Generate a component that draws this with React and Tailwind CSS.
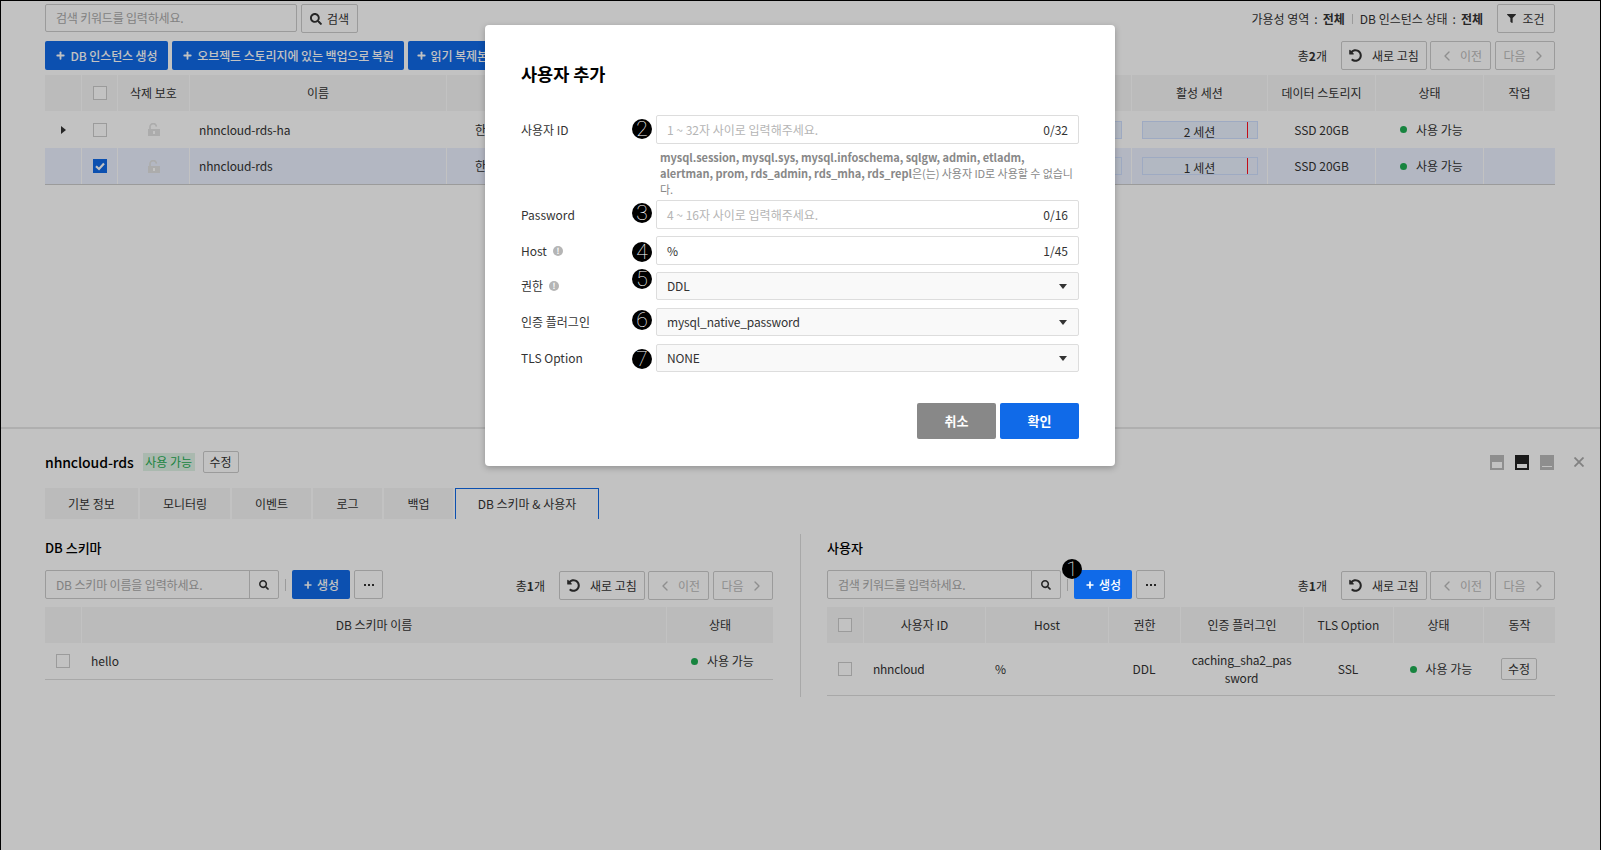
import { FaSearch, FaFilter, FaUndoAlt } from "react-icons/fa";
import { ChevronLeft, ChevronRight, Plus } from "lucide-react";

const btnLine = "h-[29px] flex items-center justify-center border border-[#ccc] rounded-[2px] bg-white text-[12px] text-[#333]";
const btnBlue = "h-[29px] flex items-center justify-center rounded-[2px] bg-[#106ae8] text-white text-[12px] font-medium tracking-[-0.1px]";

function Check({ on }) {
  if (on) {
    return (
      <span className="block w-[14px] h-[14px] bg-[#106ae8]">
        <svg viewBox="0 0 14 14" className="w-[14px] h-[14px]">
          <path d="M3 7.2 L6 10 L11 4.5" fill="none" stroke="#fff" strokeWidth="2.2" />
        </svg>
      </span>
    );
  }
  return <span className="block w-[14px] h-[14px] border border-[#ccc] bg-white" />;
}

function Lock() {
  return (
    <svg viewBox="0 0 12 13" className="w-[12px] h-[13px]">
      <path d="M2 6V4a3.2 3.2 0 0 1 6.400-.4" fill="none" stroke="#e2e2e2" strokeWidth="1.600" />
      <rect x="0" y="6" width="12" height="7" fill="#e2e2e2" />
      <rect x="5" y="8" width="2" height="3" fill="#fff" />
    </svg>
  );
}

function Dot() {
  return <span className="w-[7px] h-[7px] rounded-full bg-[#1fae54]" />;
}

function Dots() {
  return (
    <svg viewBox="0 0 10 2" className="w-[10px] h-[2px]">
      <rect x="0" width="2" height="2" fill="#333" />
      <rect x="4" width="2" height="2" fill="#333" />
      <rect x="8" width="2" height="2" fill="#333" />
    </svg>
  );
}

function Pager({ total, className = "" }) {
  return (
    <div className={`ml-auto flex items-center ${className}`}>
      <span className="text-[12px] mr-[14px]">
        총<b>{total}</b>개
      </span>
      <button className={`${btnLine} w-[86px] gap-[10px] mr-[3px]`}>
        <FaUndoAlt className="w-[13px] h-[13px]" />
        새로 고침
      </button>
      <button className={`${btnLine} w-[61px] gap-[5px] mr-[4px] text-[#bbb]`}>
        <ChevronLeft className="w-[16px] h-[16px]" />
        이전
      </button>
      <button className={`${btnLine} w-[60px] gap-[5px] text-[#bbb]`}>
        다음
        <ChevronRight className="w-[16px] h-[16px]" />
      </button>
    </div>
  );
}

function Badge({ n, className }) {
  return (
    <span className={`absolute w-[20px] h-[20px] rounded-full bg-black text-white flex items-center justify-center text-[21px] leading-none font-['Roboto',sans-serif] font-thin ${className}`}>
      {n}
    </span>
  );
}

function Bang() {
  return (
    <span className="w-[10px] h-[10px] rounded-full bg-[#b5b5b5] text-white text-[8px] leading-[10px] font-bold text-center">!</span>
  );
}

function Field({ label, bang, n, badgeTop, value, placeholder, count, select, className = "" }) {
  return (
    <div className={`relative flex items-center ${className}`}>
      <div className="w-[108px] mr-[27px] flex items-center gap-[6px] text-[12px]">
        {label}
        {bang && <Bang />}
      </div>
      <Badge n={n} className={`left-[111px] ${badgeTop}`} />
      {select ? (
        <div className="flex-1 h-[28px] border border-[#ddd] rounded-[2px] bg-[#f9f9f9] flex items-center justify-between pl-[10px] pr-[11px] text-[12px] tracking-[-0.15px]">
          {value}
          <span className="w-0 h-0 border-x-[4px] border-x-transparent border-t-[5px] border-t-[#333]" />
        </div>
      ) : (
        <div className="flex-1 h-[29px] border border-[#ddd] rounded-[2px] bg-white flex items-center justify-between px-[10px] text-[12px]">
          {value ? <span>{value}</span> : <span className="text-[#b5b5b5]">{placeholder}</span>}
          <span>{count}</span>
        </div>
      )}
    </div>
  );
}

function TopRow({ name, open, checked, selected, session, fillWidth }) {
  const bg = selected ? "bg-[#ebf1ff] border-b border-[#ccc]" : "bg-white";
  return (
    <div className={`grid grid-cols-[36px_36px_72px_257px_584px_101px_136px_108px_108px_72px] h-[37px] items-stretch ${bg}`}>
      <div className="flex items-center justify-center">
        {open && <span className="w-0 h-0 border-y-[4px] border-y-transparent border-l-[5px] border-l-[#333]" />}
      </div>
      <div className="flex items-center justify-center border-l border-white">
        <Check on={checked} />
      </div>
      <div className="flex items-center justify-center border-l border-white">
        <Lock />
      </div>
      <div className="flex items-center pl-[9px] border-l border-white tracking-[-0.15px]">{name}</div>
      <div className="flex items-center pl-[28px] border-l border-white">한국(판교) 리전</div>
      <div className="flex items-center border-l border-white pr-[9px]">
        <div className="w-full h-[18px] bg-[#eaf2ff] border border-[#d0e0ff]" />
      </div>
      <div className="flex items-center justify-center border-l border-white">
        <div className="relative w-[116px] h-[18px] border border-[#d0e0ff] text-center leading-[20px]">
          <div className={`absolute inset-y-0 left-0 bg-[#eaf2ff] ${fillWidth}`} />
          <span className="relative">{session}</span>
          <div className="absolute inset-y-0 left-[104px] w-[1.500px] bg-[#ff1020]" />
        </div>
      </div>
      <div className="flex items-center justify-center border-l border-white">SSD 20GB</div>
      <div className="flex items-center justify-center gap-[9px] pl-[4px] border-l border-white">
        <Dot />
        사용 가능
      </div>
      <div className="border-l border-white" />
    </div>
  );
}

const topHead = ["", "", "삭제 보호", "이름", "", "", "활성 세션", "데이터 스토리지", "상태", "작업"];
const userHead = ["", "사용자 ID", "Host", "권한", "인증 플러그인", "TLS Option", "상태", "동작"];

export default function App() {
  return (
    <div className="relative w-[1601px] h-[850px] overflow-hidden bg-white text-[#333] text-[12px] font-['Noto_Sans_CJK_KR','Noto_Sans',sans-serif] border-l border-r border-t border-black">
      {/* top list */}
      <div className="h-[428px] pl-[44px] pr-[45px] pt-[3px] border-b-2 border-[#e6e6e6]">
        <div className="flex items-start h-[29px]">
          <div className="w-[252px] h-[28px] border border-[#ccc] rounded-[2px] flex items-center pl-[10px] text-[#aaa] tracking-[-0.2px]">
            검색 키워드를 입력하세요.
          </div>
          <button className={`${btnLine} w-[57px] ml-[4px] gap-[5px]`}>
            <FaSearch className="w-[12px] h-[12px]" />
            검색
          </button>
          <div className="ml-auto flex items-center">
            <span className="flex items-center">
              가용성 영역<span className="mx-[5px]">:</span>
              <b>전체</b>
            </span>
            <span className="w-px h-[10px] bg-[#ccc] mx-[7px]" />
            <span className="flex items-center">
              DB 인스턴스 상태<span className="mx-[5px]">:</span>
              <b>전체</b>
            </span>
            <button className={`${btnLine} w-[58px] ml-[14px] gap-[6px]`}>
              <FaFilter className="w-[9px] h-[9px]" />
              조건
            </button>
          </div>
        </div>
        <div className="flex items-center mt-[8px]">
          <button className={`${btnBlue} w-[123px] gap-[4px]`}>
            <Plus className="w-[11px] h-[11px]" strokeWidth={4} />
            DB 인스턴스 생성
          </button>
          <button className={`${btnBlue} w-[232px] ml-[4px] gap-[4px]`}>
            <Plus className="w-[11px] h-[11px]" strokeWidth={4} />
            오브젝트 스토리지에 있는 백업으로 복원
          </button>
          <button className={`${btnBlue} w-[112px] ml-[4px] gap-[4px]`}>
            <Plus className="w-[11px] h-[11px]" strokeWidth={4} />
            읽기 복제본 생성
          </button>
          <Pager total="2" />
        </div>
        <div className="mt-[5px]">
          <div className="grid grid-cols-[36px_36px_72px_257px_584px_101px_136px_108px_108px_72px] h-[36px] bg-[#f6f6f6]">
            {topHead.map((h, i) => (
              <div key={i} className={`flex items-center justify-center ${i > 0 ? "border-l border-white" : ""}`}>
                {i === 1 ? <Check /> : h}
              </div>
            ))}
          </div>
          <TopRow name="nhncloud-rds-ha" open session="2 세션" fillWidth="w-full" />
          <TopRow name="nhncloud-rds" checked selected session="1 세션" fillWidth="w-[104px]" />
        </div>
      </div>

      {/* detail pane */}
      <div className="pl-[44px]">
        <div className="flex items-center h-[22px] mt-[22px] pr-[16px]">
          <span className="text-[14px] font-medium text-black tracking-[-0.1px]">nhncloud-rds</span>
          <span className="ml-[9px] w-[52px] h-[18px] flex items-center justify-center bg-[#e0f3e6] text-[#1fae54]">사용 가능</span>
          <button className="ml-[8px] w-[36px] h-[22px] flex items-center justify-center border border-[#ccc] rounded-[2px]">수정</button>
          <div className="ml-auto flex items-center gap-[11px]">
            <svg viewBox="0 0 14 15" className="w-[14px] h-[15px]">
              <rect width="14" height="15" fill="#bbb" />
              <rect x="2" y="7" width="10" height="6" fill="#fff" />
            </svg>
            <svg viewBox="0 0 14 15" className="w-[14px] h-[15px]">
              <rect width="14" height="15" fill="#222" />
              <rect x="2" y="9" width="10" height="4" fill="#fff" />
            </svg>
            <svg viewBox="0 0 14 15" className="w-[14px] h-[15px]">
              <rect width="14" height="15" fill="#bbb" />
              <rect x="2" y="11" width="10" height="1" fill="#fff" />
            </svg>
            <svg viewBox="0 0 10 10" className="ml-[9px] w-[10px] h-[10px]">
              <path d="M.5 .5 L9.500 9.500 M9.500 .5 L.5 9.500" stroke="#aaa" strokeWidth="1.800" />
            </svg>
          </div>
        </div>

        <div className="flex mt-[15px] h-[31px] gap-[2px]">
          <div className="w-[93px] flex items-center justify-center bg-[#f6f6f6]">기본 정보</div>
          <div className="w-[90px] flex items-center justify-center bg-[#f6f6f6]">모니터링</div>
          <div className="w-[79px] flex items-center justify-center bg-[#f6f6f6]">이벤트</div>
          <div className="w-[69px] flex items-center justify-center bg-[#f6f6f6]">로그</div>
          <div className="w-[69px] flex items-center justify-center bg-[#f6f6f6]">백업</div>
          <div className="w-[144px] flex items-center justify-center border-x border-t border-[#106ae8]">DB 스키마 &amp; 사용자</div>
        </div>

        <div className="flex mt-[15px]">
          {/* schema */}
          <div className="w-[728px]">
            <div className="h-[28px] flex items-center text-[13px] font-medium text-black">DB 스키마</div>
            <div className="flex items-start h-[30px] mt-[8px]">
              <div className="w-[234px] h-[29px] border border-[#ccc] rounded-[2px] flex">
                <div className="flex-1 flex items-center pl-[10px] text-[#aaa] tracking-[-0.15px]">DB 스키마 이름을 입력하세요.</div>
                <div className="w-[29px] border-l border-[#ccc] flex items-center justify-center">
                  <FaSearch className="w-[10px] h-[10px]" />
                </div>
              </div>
              <span className="w-px h-[12px] bg-[#ccc] mx-[6px] mt-[9px]" />
              <button className={`${btnBlue} w-[58px] gap-[4px]`}>
                <Plus className="w-[10px] h-[10px]" strokeWidth={4} />
                생성
              </button>
              <button className={`${btnLine} w-[29px] ml-[4px]`}>
                <Dots />
              </button>
              <Pager total="1" className="mt-[1px]" />
            </div>
            <div className="grid grid-cols-[36px_585px_107px] h-[36px] mt-[7px] bg-[#f6f6f6]">
              <div />
              <div className="flex items-center justify-center border-l border-white">DB 스키마 이름</div>
              <div className="flex items-center justify-center border-l border-white">상태</div>
            </div>
            <div className="grid grid-cols-[36px_585px_107px] h-[37px] border-b border-[#ddd]">
              <div className="flex items-center justify-center">
                <Check />
              </div>
              <div className="flex items-center pl-[10px]">hello</div>
              <div className="flex items-center justify-center gap-[9px] pl-[6px]">
                <Dot />
                사용 가능
              </div>
            </div>
          </div>

          {/* users */}
          <div className="ml-[27px] pl-[26px] w-[755px] h-[163px] border-l border-[#ddd]">
            <div className="h-[28px] flex items-center text-[13px] font-medium text-black">사용자</div>
            <div className="flex items-start h-[30px] mt-[8px]">
              <div className="w-[234px] h-[29px] border border-[#ccc] rounded-[2px] flex">
                <div className="flex-1 flex items-center pl-[10px] text-[#aaa] tracking-[-0.2px]">검색 키워드를 입력하세요.</div>
                <div className="w-[29px] border-l border-[#ccc] flex items-center justify-center">
                  <FaSearch className="w-[10px] h-[10px]" />
                </div>
              </div>
              <span className="w-px h-[12px] bg-[#ccc] mx-[6px] mt-[9px]" />
              <div className="relative z-20">
                <button className={`${btnBlue} w-[58px] gap-[4px] bg-[#0b4fb4]`}>
                  <Plus className="w-[10px] h-[10px]" strokeWidth={4} />
                  생성
                </button>
                <Badge n="1" className="left-[-12px] top-[-11px]" />
              </div>
              <button className={`${btnLine} w-[29px] ml-[4px]`}>
                <Dots />
              </button>
              <Pager total="1" className="mt-[1px]" />
            </div>
            <div className="grid grid-cols-[36px_122px_123px_72px_123px_90px_90px_72px] h-[36px] mt-[7px] bg-[#f6f6f6]">
              {userHead.map((h, i) => (
                <div key={i} className={`flex items-center justify-center ${i > 0 ? "border-l border-white" : ""}`}>
                  {i === 0 ? <Check /> : h}
                </div>
              ))}
            </div>
            <div className="grid grid-cols-[36px_122px_123px_72px_123px_90px_90px_72px] h-[53px] border-b border-[#ddd] items-center">
              <div className="flex justify-center">
                <Check />
              </div>
              <div className="pl-[10px] tracking-[-0.25px]">nhncloud</div>
              <div className="pl-[10px]">%</div>
              <div className="text-center">DDL</div>
              <div className="text-center leading-[18px] px-[10px] break-all tracking-[-0.2px]">caching_sha2_password</div>
              <div className="text-center">SSL</div>
              <div className="flex items-center justify-center gap-[9px] pl-[6px]">
                <Dot />
                사용 가능
              </div>
              <div className="flex justify-center">
                <button className="w-[36px] h-[22px] flex items-center justify-center border border-[#ccc] rounded-[2px]">수정</button>
              </div>
            </div>
          </div>
        </div>
      </div>

      {/* dim */}
      <div className="absolute inset-0 bg-black/[0.24] z-10" />

      {/* modal */}
      <div className="absolute left-[484px] top-[24px] w-[630px] h-[441px] z-30 bg-white rounded-[4px] shadow-[0_2px_6px_rgba(0,0,0,0.25)] px-[36px] pt-[36px]">
        <h2 className="text-[17.500px] leading-[26px] font-bold text-black">사용자 추가</h2>
        <div className="mt-[28px]">
          <Field label="사용자 ID" n="2" badgeTop="top-[4px]" placeholder="1 ~ 32자 사이로 입력해주세요." count="0/32" />
          <p className="ml-[139px] mt-[5px] text-[11px] leading-[16px] text-[#888] tracking-[-0.05px]">
            <b>mysql.session, mysql.sys, mysql.infoschema, sqlgw, admin, etladm, alertman, prom, rds_admin, rds_mha, rds_repl</b>은(는) 사용자 ID로 사용할 수 없습니다.
          </p>
          <Field className="mt-[3px]" label="Password" n="3" badgeTop="top-[3px]" placeholder="4 ~ 16자 사이로 입력해주세요." count="0/16" />
          <Field className="mt-[7px]" label="Host" bang n="4" badgeTop="top-[6px]" value="%" count="1/45" />
          <Field className="mt-[7px]" label="권한" bang n="5" badgeTop="top-[-3px]" value="DDL" select />
          <Field className="mt-[8px]" label="인증 플러그인" n="6" badgeTop="top-[2px]" value="mysql_native_password" select />
          <Field className="mt-[8px]" label="TLS Option" n="7" badgeTop="top-[5px]" value="NONE" select />
        </div>
        <div className="flex justify-end gap-[4px] mt-[31px]">
          <button className="w-[79px] h-[36px] rounded-[2px] bg-[#888] text-white text-[13px] font-bold">취소</button>
          <button className="w-[79px] h-[36px] rounded-[2px] bg-[#106ae8] text-white text-[13px] font-bold">확인</button>
        </div>
      </div>
    </div>
  );
}
